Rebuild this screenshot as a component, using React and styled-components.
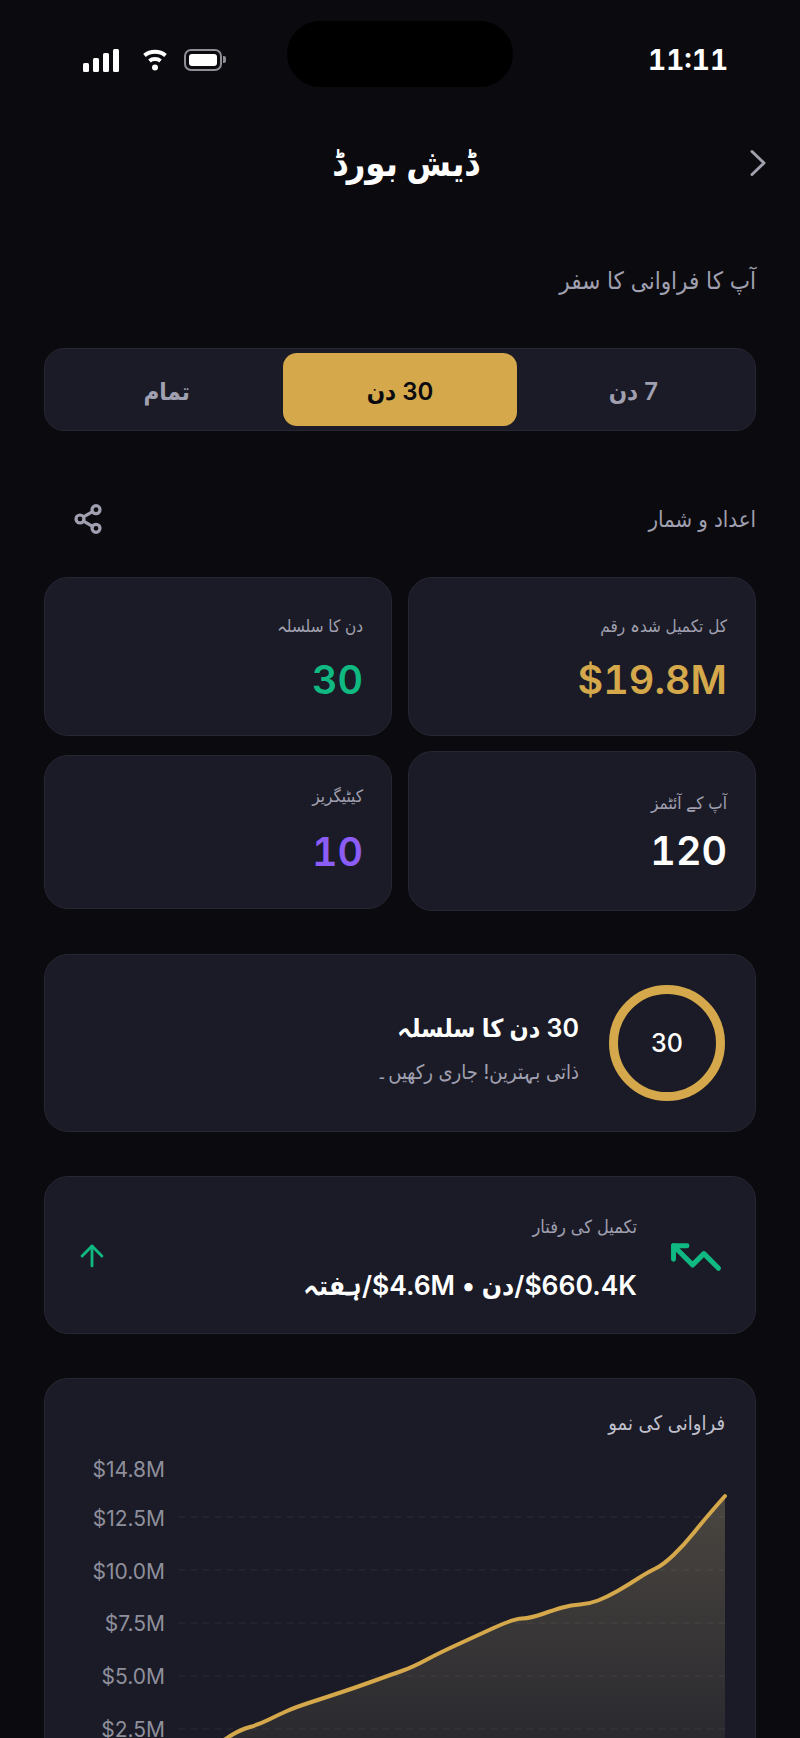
import React from "react";
import styled, { createGlobalStyle } from "styled-components";
import { ArrowUp, Share2, TrendingUp } from "lucide-react";

const GOLD = "#d4a84b";
const GREEN = "#10b981";
const MUTED = "#a0a0b0";

const axisLabels = [
  ["$14.8M", 1469],
  ["$12.5M", 1518],
  ["$10.0M", 1571],
  ["$7.5M", 1623],
  ["$5.0M", 1676],
  ["$2.5M", 1729],
];

const gridLines = [1517, 1570, 1623, 1676, 1729];

// growth curve, in page coordinates (the chart's viewBox uses the same ones)
const curve = [
  [205, 1752], [227, 1738], [240, 1730], [260, 1724], [278, 1715], [296, 1707],
  [327, 1697], [357, 1687], [393, 1674], [413, 1667], [439, 1653], [474, 1637],
  [513, 1619], [531, 1618], [554, 1610], [571, 1605], [589, 1604], [607, 1597],
  [628, 1585], [648, 1572], [663, 1565], [684, 1545], [704, 1520], [725, 1496],
];

// round the joints: each point is a control point between two midpoints
const smooth = (pts) => {
  let d = `M${pts[0][0]} ${pts[0][1]}`;
  for (let i = 1; i < pts.length - 1; i++) {
    const mx = (pts[i][0] + pts[i + 1][0]) / 2;
    const my = (pts[i][1] + pts[i + 1][1]) / 2;
    d += ` Q${pts[i][0]} ${pts[i][1]} ${mx} ${my}`;
  }
  const last = pts[pts.length - 1];
  return `${d} L${last[0]} ${last[1]}`;
};

const linePath = smooth(curve);
const areaPath = `${linePath} L725 1760 L205 1760 Z`;

const GlobalStyle = createGlobalStyle`
  html, body {
    margin: 0;
    padding: 0;
    background: #0a0a0f;
  }
  * {
    box-sizing: border-box;
  }
`;

const Screen = styled.div`
  position: relative;
  width: 800px;
  height: 1738px;
  overflow: hidden;
  direction: rtl;
  background: #0a0a0f;
  color: #fff;
  font-family: Inter, "DejaVu Sans Condensed", "DejaVu Sans", sans-serif;
`;

const Island = styled.div`
  position: absolute;
  top: 21px;
  left: 287px;
  width: 226px;
  height: 66px;
  border-radius: 33px;
  background: #000;
`;

const StatusBar = styled.div`
  height: 120px;
  padding: 0 72px 0 83px;
  display: flex;
  align-items: center;
  justify-content: space-between;
`;

const Time = styled.div`
  font-size: 28px;
  font-weight: 700;
  font-variant-numeric: tabular-nums;
`;

const StatusIcons = styled.div`
  direction: ltr;
  display: flex;
  align-items: center;
  gap: 24px;
  height: 30px;
`;

const Signal = styled.div`
  display: flex;
  align-items: flex-end;
  gap: 4px;
  height: 23px;
`;

const SignalBar = styled.span`
  width: 6px;
  height: ${(p) => p.$h}px;
  border-radius: 1.5px;
  background: #fff;
`;

const Battery = styled.div`
  position: relative;
  width: 38px;
  height: 22px;
  margin-left: -7px;
  padding: 3px;
  border: 2px solid #8e8e96;
  border-radius: 7px;

  &::before {
    content: "";
    display: block;
    height: 100%;
    border-radius: 3px;
    background: #fff;
  }

  &::after {
    content: "";
    position: absolute;
    top: 5px;
    right: -6px;
    width: 3px;
    height: 7px;
    border-radius: 0 2px 2px 0;
    background: #8e8e96;
  }
`;

const Header = styled.header`
  height: 86px;
  padding: 0 33px 0 44px;
  display: grid;
  grid-template-columns: 1fr auto 1fr;
  align-items: center;
`;

const Back = styled.svg`
  width: 18px;
  height: 28px;
  justify-self: start;
  fill: none;
  stroke: #a0a0ae;
  stroke-width: 3;
  stroke-linecap: round;
  stroke-linejoin: round;
`;

const Title = styled.h1`
  margin: 0;
  font-size: 36px;
  font-weight: 700;
  line-height: 60px;
  grid-column: 2;
`;

const Content = styled.main`
  padding: 0 44px;
`;

const Subtitle = styled.p`
  margin: 52px 0 0;
  height: 46px;
  font-size: 24px;
  line-height: 46px;
  color: ${MUTED};
`;

const Tabs = styled.div`
  margin-top: 44px;
  height: 83px;
  padding: 4px 5px;
  display: grid;
  grid-template-columns: repeat(3, 1fr);
  background: #1a1b26;
  border: 1px solid #262733;
  border-radius: 20px;
`;

const Tab = styled.div`
  padding-top: 4px;
  display: flex;
  align-items: center;
  justify-content: center;
  font-size: 24px;
  font-weight: 600;
  border-radius: 14px;
  color: ${(p) => (p.$active ? "#0a0a0f" : MUTED)};
  background: ${(p) => (p.$active ? GOLD : "transparent")};
`;

const SectionHead = styled.div`
  margin-top: 72px;
  height: 32px;
  padding-left: 28px;
  display: flex;
  align-items: center;
  justify-content: space-between;
  color: ${MUTED};

  svg {
    display: block;
  }
`;

const SectionTitle = styled.h2`
  margin: 0;
  font-size: 22px;
  font-weight: 400;
`;

const StatGrid = styled.div`
  margin-top: 42px;
  display: grid;
  grid-template-columns: 1fr 1fr;
  column-gap: 16px;
  align-items: start;
`;

const StatColumn = styled.div`
  display: flex;
  flex-direction: column;
  gap: ${(p) => p.$gap}px;
`;

const Card = styled.section`
  background: #1a1b26;
  border: 1px solid #262733;
  border-radius: 24px;
`;

const StatCard = styled(Card)`
  height: ${(p) => p.$h}px;
  padding: ${(p) => p.$top}px 28px 0;
`;

const StatLabel = styled.div`
  height: 40px;
  font-size: 17px;
  line-height: 40px;
  color: ${MUTED};
`;

const StatValue = styled.div`
  margin-top: ${(p) => p.$gap}px;
  font-size: 39.5px;
  font-weight: 600;
  line-height: 48px;
  font-variant-numeric: tabular-nums;
  color: ${(p) => p.$color};
`;

const StreakCard = styled(Card)`
  margin-top: 43px;
  height: 178px;
  padding: 0 30px;
  display: flex;
  align-items: center;
  gap: 30px;
`;

const Ring = styled.div`
  width: 116px;
  height: 116px;
  flex: none;
  display: flex;
  align-items: center;
  justify-content: center;
  border: 9px solid ${GOLD};
  border-radius: 50%;
  font-size: 25px;
  font-weight: 500;
`;

const StreakText = styled.div`
  padding-top: 12px;
`;

const StreakTitle = styled.div`
  font-size: 25px;
  font-weight: 600;
  line-height: 44px;
`;

const StreakNote = styled.div`
  margin-top: 2px;
  font-size: 20px;
  line-height: 40px;
  color: ${MUTED};
`;

const PaceCard = styled(Card)`
  margin-top: 44px;
  height: 158px;
  padding: 0 32px 0 30px;
  display: flex;
  align-items: center;
  gap: 32px;

  svg {
    flex: none;
  }
`;

const Trend = styled(TrendingUp)`
  margin-top: 4px;
  transform: scaleX(-1);
`;

const PaceText = styled.div`
  flex: 1;
`;

const PaceLabel = styled.div`
  font-size: 18px;
  line-height: 44px;
  color: ${MUTED};
`;

const PaceValue = styled.div`
  margin-top: 16px;
  font-size: 26.5px;
  font-weight: 600;
  line-height: 40px;
`;

const Up = styled(ArrowUp)`
  margin-top: 2px;
`;

const ChartCard = styled(Card)`
  margin-top: 44px;
  height: 480px;
  border-bottom: none;
`;

const ChartTitle = styled.h3`
  margin: 0;
  height: 71px;
  padding: 22px 30px 0;
  font-size: 20px;
  font-weight: 400;
  line-height: 44px;
  color: #c0c0cc;
`;

const Chart = styled.svg`
  display: block;
  direction: ltr;
  font-family: Inter, sans-serif;
  font-size: 21px;
`;

const WifiIcon = () => (
  <svg width="24" height="22" viewBox="0 0 24 22" fill="none" stroke="#fff" strokeWidth="4">
    <path d="M1.5 6.5c6-5 15-5 21 0" />
    <path d="M6.5 12c3-2.600 8-2.600 11 0" />
    <circle cx="12" cy="18.500" r="3" fill="#fff" stroke="none" />
  </svg>
);

export default function App() {
  return (
    <>
      <GlobalStyle />
      <Screen>
        <Island />
        <StatusBar>
          <Time>11:11</Time>
          <StatusIcons>
            <Signal>
              {[9, 14, 19, 23].map((h) => (
                <SignalBar key={h} $h={h} />
              ))}
            </Signal>
            <WifiIcon />
            <Battery />
          </StatusIcons>
        </StatusBar>
        <Header>
          <Back viewBox="0 0 18 28">
            <polyline points="3,2.500 15,14 3,25.500" />
          </Back>
          <Title>ڈیش بورڈ</Title>
        </Header>
        <Content>
          <Subtitle>آپ کا فراوانی کا سفر</Subtitle>
          <Tabs>
            <Tab>7 دن</Tab>
            <Tab $active>30 دن</Tab>
            <Tab>تمام</Tab>
          </Tabs>
          <SectionHead>
            <SectionTitle>اعداد و شمار</SectionTitle>
            <Share2 size={32} strokeWidth={2.4} />
          </SectionHead>
          <StatGrid>
            <StatColumn $gap={15}>
              <StatCard $h={159} $top={28}>
                <StatLabel>کل تکمیل شدہ رقم</StatLabel>
                <StatValue $gap={10} $color={GOLD}>$19.8M</StatValue>
              </StatCard>
              <StatCard $h={160} $top={31}>
                <StatLabel>آپ کے آئٹمز</StatLabel>
                <StatValue $gap={4} $color="#fff">120</StatValue>
              </StatCard>
            </StatColumn>
            <StatColumn $gap={19}>
              <StatCard $h={159} $top={28}>
                <StatLabel>دن کا سلسلہ</StatLabel>
                <StatValue $gap={10} $color={GREEN}>30</StatValue>
              </StatCard>
              <StatCard $h={154} $top={20}>
                <StatLabel>کیٹیگریز</StatLabel>
                <StatValue $gap={12} $color="#8b5cf6">10</StatValue>
              </StatCard>
            </StatColumn>
          </StatGrid>
          <StreakCard>
            <Ring>30</Ring>
            <StreakText>
              <StreakTitle>30 دن کا سلسلہ</StreakTitle>
              <StreakNote>ذاتی بہترین! جاری رکھیں۔</StreakNote>
            </StreakText>
          </StreakCard>
          <PaceCard>
            <Trend size={54} strokeWidth={2.2} color={GREEN} />
            <PaceText>
              <PaceLabel>تکمیل کی رفتار</PaceLabel>
              <PaceValue>
                <bdi>$660.4K</bdi>/دن • <bdi>$4.6M</bdi>/ہفتہ
              </PaceValue>
            </PaceText>
            <Up size={34} strokeWidth={2} color={GREEN} />
          </PaceCard>
          <ChartCard>
            <ChartTitle>فراوانی کی نمو</ChartTitle>
            <Chart width="710" height="300" viewBox="45 1450 710 300">
              <defs>
                <linearGradient id="growth" x1="0" y1="1496" x2="0" y2="1740" gradientUnits="userSpaceOnUse">
                  <stop offset="0" stopColor="#baaa7d" stopOpacity="0.3" />
                  <stop offset="1" stopColor="#baaa7d" stopOpacity="0.1" />
                </linearGradient>
              </defs>
              {gridLines.map((y) => (
                <line key={y} x1="179" x2="725" y1={y} y2={y} stroke="#2b2c38" strokeDasharray="6 6" />
              ))}
              <path d={areaPath} fill="url(#growth)" />
              <path
                d={linePath}
                fill="none"
                stroke={GOLD}
                strokeWidth="4"
                strokeLinecap="round"
                strokeLinejoin="round"
              />
              {axisLabels.map(([label, y]) => (
                <text key={label} x="165" y={y + 8} textAnchor="end" fill="#8f8f9c">
                  {label}
                </text>
              ))}
            </Chart>
          </ChartCard>
        </Content>
      </Screen>
    </>
  );
}
